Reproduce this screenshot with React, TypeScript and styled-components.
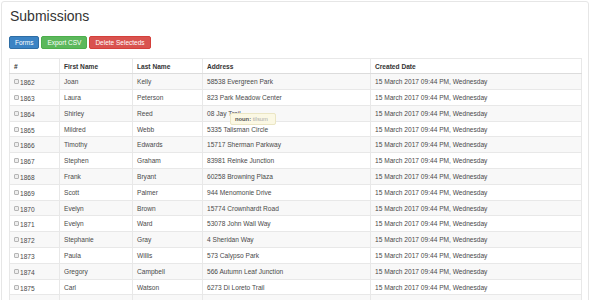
import React from "react";
import styled, { createGlobalStyle } from "styled-components";

const Global = createGlobalStyle`
  html, body { margin: 0; padding: 0; background: #fff; overflow: hidden; }
  body { font-family: "Liberation Sans", Arial, Helvetica, sans-serif; color: #444; }
`;

const Card = styled.div`
  position: relative;
  box-sizing: border-box;
  margin: 1px 0 0 1px;
  width: 588px;
  border: 1px solid #e6e6e6;
  border-radius: 3px;
  padding: 6px 7px 0 7px;
  min-height: 320px;
`;

const Title = styled.h1`
  margin: 0;
  font-size: 14px;
  line-height: 16px;
  font-weight: 500;
  color: #333;
  padding-left: 1px;
`;

const Toolbar = styled.div`
  display: flex;
  gap: 2px;
  margin-top: 12px;
`;

const Button = styled.button<{ $bg: string; $bd: string }>`
  box-sizing: border-box;
  height: 13px;
  padding: 0 5px;
  margin: 0;
  border: 1px solid ${(p) => p.$bd};
  border-radius: 2px;
  background: ${(p) => p.$bg};
  color: #fff;
  font-family: inherit;
  font-size: 6.5px;
  line-height: 11px;
  display: flex;
  align-items: center;
`;

const Table = styled.table`
  margin-top: 9px;
  width: 572px;
  border-collapse: collapse;
  table-layout: fixed;
  font-size: 6.6px;
`;

const HeadRow = styled.tr`
  height: 15.3px;
`;

const Th = styled.th<{ $w: number }>`
  width: ${(p) => p.$w}px;
  box-sizing: border-box;
  text-align: left;
  font-weight: bold;
  color: #333;
  padding: 0 4px;
  border: 1px solid #e8e8e8;
  border-bottom: 1px solid #dcdcdc;
  vertical-align: middle;
`;

const Row = styled.tr<{ $striped: boolean }>`
  height: 15.8px;
  background: ${(p) => (p.$striped ? "#f8f8f8" : "#fff")};
`;

const Td = styled.td`
  padding: 0 4px;
  border: 1px solid #e8e8e8;
  vertical-align: middle;
  white-space: nowrap;
  overflow: hidden;
  color: #4a4a4a;
`;

const IdCell = styled.span`
  display: inline-flex;
  align-items: flex-end;
  gap: 1px;
`;

const Check = styled.input`
  appearance: none;
  width: 5px;
  height: 5px;
  margin: 0 0 1px 0;
  border: 1px solid #b5b5b5;
  border-radius: 1px;
  background: #eee;
  box-sizing: border-box;
`;

const Num = styled.span`
  position: relative;
  top: 1px;
`;

const Tip = styled.div`
  position: absolute;
  left: 228px;
  top: 111px;
  box-sizing: border-box;
  width: 46px;
  height: 12px;
  background: #fbf8e4;
  border: 1px solid #ebe6c4;
  border-radius: 2px;
  font-size: 5.8px;
  line-height: 10px;
  padding: 0 4px;
  color: #aaa;
  white-space: nowrap;
`;

const TipKey = styled.b`
  color: #555;
`;

const rows: [number, string, string, string][] = [
  [1862, "Joan", "Kelly", "58538 Evergreen Park"],
  [1863, "Laura", "Peterson", "823 Park Meadow Center"],
  [1864, "Shirley", "Reed", "08 Jay Trail"],
  [1865, "Mildred", "Webb", "5335 Talisman Circle"],
  [1866, "Timothy", "Edwards", "15717 Sherman Parkway"],
  [1867, "Stephen", "Graham", "83981 Reinke Junction"],
  [1868, "Frank", "Bryant", "60258 Browning Plaza"],
  [1869, "Scott", "Palmer", "944 Menomonie Drive"],
  [1870, "Evelyn", "Brown", "15774 Crownhardt Road"],
  [1871, "Evelyn", "Ward", "53078 John Wall Way"],
  [1872, "Stephanie", "Gray", "4 Sheridan Way"],
  [1873, "Paula", "Willis", "573 Calypso Park"],
  [1874, "Gregory", "Campbell", "566 Autumn Leaf Junction"],
  [1875, "Carl", "Watson", "6273 Di Loreto Trail"],
];

const DATE = "15 March 2017 09:44 PM, Wednesday";

export default function App() {
  return (
    <>
      <Global />
      <Card>
        <Title>Submissions</Title>
        <Toolbar>
          <Button $bg="#3b83c4" $bd="#2e6da4">Forms</Button>
          <Button $bg="#5cb85c" $bd="#4cae4c">Export CSV</Button>
          <Button $bg="#d9534f" $bd="#d43f3a">Delete Selecteds</Button>
        </Toolbar>
        <Table>
          <thead>
            <HeadRow>
              <Th $w={50}>#</Th>
              <Th $w={73}>First Name</Th>
              <Th $w={70}>Last Name</Th>
              <Th $w={168}>Address</Th>
              <Th $w={211}>Created Date</Th>
            </HeadRow>
          </thead>
          <tbody>
            {rows.map(([id, first, last, addr], i) => (
              <Row key={id} $striped={i % 2 === 0}>
                <Td>
                  <IdCell>
                    <Check type="checkbox" readOnly />
                    <Num>{id}</Num>
                  </IdCell>
                </Td>
                <Td>{first}</Td>
                <Td>{last}</Td>
                <Td>{addr}</Td>
                <Td>{DATE}</Td>
              </Row>
            ))}
            <Row $striped={rows.length % 2 === 0}>
              <Td />
              <Td />
              <Td />
              <Td />
              <Td />
            </Row>
          </tbody>
        </Table>
        <Tip>
          <TipKey>noun:</TipKey> tilsum
        </Tip>
      </Card>
    </>
  );
}
